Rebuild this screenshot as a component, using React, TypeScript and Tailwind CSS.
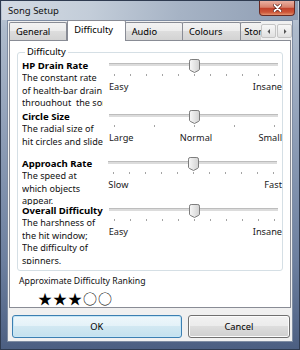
import React from "react";

const F = "font-['Noto_Sans',sans-serif]";

function Thumb() {
  return (
    <svg width="11" height="14" viewBox="0 0 11 14" className="absolute left-[80px] top-0">
      <defs>
        <linearGradient id="tg" x1="0" y1="0" x2="1" y2="0">
          <stop offset="0" stopColor="#f8f8f8" />
          <stop offset="1" stopColor="#d2d2d2" />
        </linearGradient>
      </defs>
      <path
        d="M0.5 2.2 Q0.5 0.5 2.2 0.5 H8.8 Q10.5 0.5 10.5 2.2 V10 Q10.5 10.8 9.8 11.3 L5.5 13.5 L1.2 11.3 Q0.5 10.8 0.5 10 Z"
        fill="url(#tg)"
        stroke="#7d7d7d"
        strokeWidth="1"
      />
    </svg>
  );
}

function Slider({ ticks, labels }: { ticks: number; labels: string[] }) {
  return (
    <div className="flex flex-col w-[175px] -mt-[1px] ml-[6px]">
      <div className="relative h-[13px] w-[169px]">
        <div className="absolute left-0 right-0 top-[4px] h-[3px] bg-[#dcdcdc] border-t border-[#bdbdbd]" />
        <Thumb />
      </div>
      <div className="flex justify-between w-[161px] ml-[5px] mt-[2px] h-[2px]">
        {Array.from({ length: ticks }).map((_, i) => (
          <div key={i} className="w-px h-[2px] bg-[#a4a4a4]" />
        ))}
      </div>
      <div className="flex justify-between mt-[5px] text-[9.2px] leading-[12px] text-[#1a1a1a]">
        {labels.map((l) => (
          <span key={l}>{l}</span>
        ))}
      </div>
    </div>
  );
}

const rows = [
  {
    title: "HP Drain Rate",
    lines: ["The constant rate", "of health-bar drain", "throughout  the song."],
    h: "h-[51px]",
    dh: "h-[34px]",
    ticks: 11,
    labels: ["Easy", "Insane"],
  },
  {
    title: "Circle Size",
    lines: ["The radial size of", "hit circles and sliders."],
    h: "h-[47px]",
    dh: "h-[26px]",
    ticks: 5,
    labels: ["Large", "Normal", "Small"],
  },
  {
    title: "Approach Rate",
    lines: ["The speed at", "which objects", "appear."],
    h: "h-[47px]",
    dh: "h-[35px]",
    ticks: 11,
    labels: ["Slow", "Fast"],
  },
  {
    title: "Overall Difficulty",
    lines: ["The harshness of", "the hit window;", "The difficulty of", "spinners."],
    h: "h-[60px]",
    dh: "h-[47px]",
    ticks: 11,
    labels: ["Easy", "Insane"],
  },
];

function Tab({ label, w, selected }: { label: string; w: string; selected?: boolean }) {
  if (selected) {
    return (
      <div
        className={`${w} h-[21px] -mb-px relative z-10 bg-white border border-b-0 border-[#898c95] rounded-t-[2px] pl-[6px] text-[9.3px] leading-[17px] text-black`}
      >
        {label}
      </div>
    );
  }
  return (
    <div
      className={`${w} h-[18px] border border-b-0 border-[#898c95] -ml-px first:ml-0 rounded-t-[2px] bg-[linear-gradient(180deg,#f3f3f3_0%,#ebebeb_50%,#dddddd_50%,#d3d3d3_100%)] pl-[6px] text-[9.3px] leading-[17px] text-black overflow-hidden whitespace-nowrap`}
    >
      {label}
    </div>
  );
}

function Arrow({ dir }: { dir: "l" | "r" }) {
  return (
    <div className="w-[15px] h-[14px] border border-[#c4c4c4] rounded-[2px] bg-[linear-gradient(180deg,#f7f7f7_0%,#ececec_50%,#e0e0e0_100%)] flex items-center justify-center">
      <svg width="4" height="5" viewBox="0 0 4 5">
        {dir === "l" ? <path d="M3 0 L0.5 2.5 L3 5 Z" fill="#555" /> : <path d="M1 0 L3.5 2.5 L1 5 Z" fill="#555" />}
      </svg>
    </div>
  );
}

export default function App() {
  return (
    <div
      className={`${F} w-[300px] h-[350px] flex flex-col px-[6px] pb-[7px] border border-[#2f3b50] bg-[linear-gradient(180deg,#c4cedb_0%,#aebbcc_8%,#8d9db6_40%,#6c7f9f_75%,#4c5f82_100%)]`}
    >
      <div className="h-[19px] -mx-[5px] flex items-start justify-between bg-[linear-gradient(95deg,#d3dae3_0%,#c3cdd9_30%,#a6b3c5_60%,#8e9db3_100%)]">
        <div className="pl-[6px] pt-[3px] text-[9.5px] leading-[13px] text-[#111]">Song Setup</div>
        <div className="mr-[3px] w-[36px] h-[15px] border border-t-0 border-[#6a2a22] rounded-b-[4px] bg-[linear-gradient(180deg,#eab0a2_0%,#d7806b_45%,#c2412b_52%,#cd5638_80%,#e4926f_100%)] flex items-center justify-center">
          <svg width="9" height="8" viewBox="0 0 9 8">
            <path d="M1.5 1 L7.5 7 M7.5 1 L1.5 7" stroke="#5a1c14" strokeWidth="3.2" strokeLinecap="round" />
            <path d="M1.5 1 L7.5 7 M7.5 1 L1.5 7" stroke="#ffffff" strokeWidth="1.8" strokeLinecap="round" />
          </svg>
        </div>
      </div>
      <div className="flex-1 flex flex-col bg-[#f0f0f0] border border-[#7e8ca2]">
        <div className="flex items-end h-[19px] pl-px">
          <Tab label="General" w="w-[59px]" />
          <Tab label="Difficulty" w="w-[59px]" selected />
          <Tab label="Audio" w="w-[59px]" />
          <Tab label="Colours" w="w-[60px]" />
          <div className="w-[21px] h-[18px] -ml-px border border-b-0 border-r-0 border-[#898c95] rounded-tl-[2px] bg-[linear-gradient(180deg,#f3f3f3_0%,#ebebeb_50%,#dddddd_50%,#d3d3d3_100%)] pl-[3px] text-[9.3px] leading-[17px] overflow-hidden whitespace-nowrap">
            Storyboard
          </div>
          <div className="self-start mt-[3px] flex gap-px">
            <Arrow dir="l" />
            <Arrow dir="r" />
          </div>
        </div>
        <div className="h-[268px] mx-px bg-white border border-[#898c95] px-[7px] pt-[5px] flex flex-col">
          <fieldset className="border border-[#d5dfe5] rounded-[3px] pl-[4px] pb-[5px] min-w-0">
            <legend className="ml-[3px] px-[2px] text-[9.3px] leading-[12px] text-black">Difficulty</legend>
            <div className="flex flex-col pt-[2px]">
              {rows.map((r) => (
                <div key={r.title} className={`flex ${r.h}`}>
                  <div className="w-[81px] flex flex-col">
                    <div className="h-[12px] text-[9.6px] leading-[12px] font-bold text-black whitespace-nowrap">{r.title}</div>
                    <div className={`${r.dh} overflow-hidden text-[9.1px] leading-[12.5px] text-[#111]`}>
                      {r.lines.map((l) => (
                        <div key={l} className="whitespace-pre">
                          {l}
                        </div>
                      ))}
                    </div>
                  </div>
                  <Slider ticks={r.ticks} labels={r.labels} />
                </div>
              ))}
            </div>
          </fieldset>
          <div className="ml-[2px] mt-[4px] text-[8.7px] leading-[12px] text-[#111]">Approximate Difficulty Ranking</div>
          <div className="ml-[21px] mt-[3px] text-[14px] leading-[16px] tracking-[1px] text-black font-['Noto_Sans_CJK_JP',sans-serif]">
            ★★★○○
          </div>
        </div>
        <div className="flex pt-[7px] pl-[4px] pr-[2px] gap-[6px]">
          <button className="w-[171px] h-[23px] rounded-[3px] border border-[#3c7fb1] bg-[linear-gradient(180deg,#eef7fb_0%,#e3f1f8_50%,#d1e8f2_50%,#c4e1ee_100%)] shadow-[inset_0_0_0_1px_#c6e6f6] text-[9.3px] text-black">
            OK
          </button>
          <button className="w-[103px] h-[23px] rounded-[3px] border border-[#707070] bg-[linear-gradient(180deg,#f2f2f2_0%,#ebebeb_50%,#dddddd_50%,#cfcfcf_100%)] shadow-[inset_0_0_0_1px_#fcfcfc] text-[9.3px] text-black">
            Cancel
          </button>
        </div>
      </div>
    </div>
  );
}
